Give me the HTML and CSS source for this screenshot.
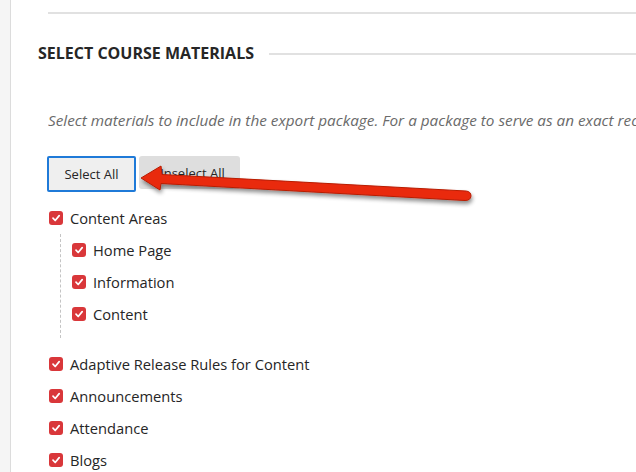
FILE: index.html
```html
<!DOCTYPE html>
<html>
<head>
<meta charset="utf-8">
<link rel="stylesheet" href="styles.css">
</head>
<body>
<div class="page">
  <div class="gutter"></div>
  <div class="main">
    <div class="topline"></div>
    <div class="heading">
      <h2>SELECT COURSE MATERIALS</h2>
      <div class="rule"></div>
    </div>
    <p class="desc">Select materials to include in the export package. For a package to serve as an exact record of the course, select all materials.</p>
    <div class="buttons">
      <button class="btn btn-primary">Select All</button>
      <button class="btn btn-secondary">Unselect All</button>
    </div>
    <ul class="list">
      <li class="item"><span class="cb"><svg viewBox="0 0 14 14"><rect width="14" height="14" rx="3" fill="#d9373a"/><path d="M4 7.2 L6.2 9.5 L10.2 4.6" fill="none" stroke="#fff" stroke-width="1.7" stroke-linecap="round" stroke-linejoin="round"/></svg></span>Content Areas</li>
      <li class="group">
        <ul class="sublist">
          <li class="item"><span class="cb"><svg viewBox="0 0 14 14"><rect width="14" height="14" rx="3" fill="#d9373a"/><path d="M4 7.2 L6.2 9.5 L10.2 4.6" fill="none" stroke="#fff" stroke-width="1.7" stroke-linecap="round" stroke-linejoin="round"/></svg></span>Home Page</li>
          <li class="item"><span class="cb"><svg viewBox="0 0 14 14"><rect width="14" height="14" rx="3" fill="#d9373a"/><path d="M4 7.2 L6.2 9.5 L10.2 4.6" fill="none" stroke="#fff" stroke-width="1.7" stroke-linecap="round" stroke-linejoin="round"/></svg></span>Information</li>
          <li class="item"><span class="cb"><svg viewBox="0 0 14 14"><rect width="14" height="14" rx="3" fill="#d9373a"/><path d="M4 7.2 L6.2 9.5 L10.2 4.6" fill="none" stroke="#fff" stroke-width="1.7" stroke-linecap="round" stroke-linejoin="round"/></svg></span>Content</li>
        </ul>
      </li>
      <li class="item gap"><span class="cb"><svg viewBox="0 0 14 14"><rect width="14" height="14" rx="3" fill="#d9373a"/><path d="M4 7.2 L6.2 9.5 L10.2 4.6" fill="none" stroke="#fff" stroke-width="1.7" stroke-linecap="round" stroke-linejoin="round"/></svg></span>Adaptive Release Rules for Content</li>
      <li class="item"><span class="cb"><svg viewBox="0 0 14 14"><rect width="14" height="14" rx="3" fill="#d9373a"/><path d="M4 7.2 L6.2 9.5 L10.2 4.6" fill="none" stroke="#fff" stroke-width="1.7" stroke-linecap="round" stroke-linejoin="round"/></svg></span>Announcements</li>
      <li class="item"><span class="cb"><svg viewBox="0 0 14 14"><rect width="14" height="14" rx="3" fill="#d9373a"/><path d="M4 7.2 L6.2 9.5 L10.2 4.6" fill="none" stroke="#fff" stroke-width="1.7" stroke-linecap="round" stroke-linejoin="round"/></svg></span>Attendance</li>
      <li class="item"><span class="cb"><svg viewBox="0 0 14 14"><rect width="14" height="14" rx="3" fill="#d9373a"/><path d="M4 7.2 L6.2 9.5 L10.2 4.6" fill="none" stroke="#fff" stroke-width="1.7" stroke-linecap="round" stroke-linejoin="round"/></svg></span>Blogs</li>
    </ul>
  </div>
</div>
<svg class="arrow" width="636" height="472" viewBox="0 0 636 472">
  <defs>
    <filter id="sh" x="-10%" y="-50%" width="120%" height="200%">
      <feGaussianBlur in="SourceAlpha" stdDeviation="2"/>
      <feOffset dx="1" dy="3" result="b"/>
      <feComponentTransfer><feFuncA type="linear" slope="0.45"/></feComponentTransfer>
      <feMerge><feMergeNode/><feMergeNode in="SourceGraphic"/></feMerge>
    </filter>
  </defs>
  <path filter="url(#sh)" d="M141 178 L161 166 L162 174.5 L466 191 Q471 191.5 471 196 Q470.5 200.5 465 200.5 L161 183.5 L160 190 Z" fill="#e92a0c" stroke="#b81d06" stroke-width="1" stroke-linejoin="round"/>
</svg>
</body>
</html>
```

FILE: styles.css
```css
html, body {
  margin: 0;
  padding: 0;
  background: #fff;
}
body {
  font-family: "Open Sans", "Noto Sans", sans-serif;
  color: #262626;
  overflow: hidden;
  width: 636px;
  height: 472px;
  position: relative;
}
.page {
  display: flex;
  min-height: 472px;
}
.gutter {
  width: 10px;
  flex: 0 0 10px;
  background: #f5f5f5;
  border-right: 1px solid #dcdcdc;
}
.main {
  flex: 1;
  padding-left: 27px;
  min-width: 0;
  overflow: hidden;
}
.topline {
  margin-top: 12px;
  margin-left: 10px;
  height: 2px;
  background: #e1e1e1;
}
.heading {
  display: flex;
  align-items: center;
  margin-top: 27px;
}
.heading h2 {
  margin: 0;
  font-size: 16px;
  font-weight: 700;
  letter-spacing: 0;
  color: #262626;
  line-height: 24px;
  white-space: nowrap;
}
.heading .rule {
  flex: 1;
  height: 2px;
  background: #e1e1e1;
  margin-left: 15px;
  margin-top: 1px;
}
.desc {
  margin: 44px 0 0 10px;
  font-style: italic;
  font-size: 15.3px;
  color: #6a6a6a;
  white-space: nowrap;
  line-height: 22px;
  overflow: hidden;
}
.buttons {
  display: flex;
  gap: 3px;
  margin: 25px 0 0 9px;
  align-items: flex-start;
}
.btn {
  font-family: "Open Sans", "Noto Sans", sans-serif;
  font-size: 13px;
  color: #262626;
  height: 36px;
  border-radius: 3px;
  padding: 0;
}
.btn-primary {
  width: 89px;
  background: #efefef;
  border: 2px solid #1f7ad8;
  border-radius: 2px;
}
.btn-secondary {
  width: 101px;
  height: 33px;
  background: #dedede;
  border: none;
}
.list {
  list-style: none;
  margin: 10px 0 0 11px;
  padding: 0;
}
.item {
  display: flex;
  align-items: center;
  height: 32px;
  font-size: 14.7px;
  color: #262626;
}
.cb {
  width: 14px;
  height: 14px;
  margin-right: 7px;
  display: inline-flex;
}
.cb svg {
  width: 14px;
  height: 14px;
}
.group {
  margin-left: 11px;
  border-left: 1px dashed #c4c4c4;
  padding-left: 11px;
}
.sublist {
  list-style: none;
  margin: 0;
  padding: 0 0 8px 0;
}
.gap {
  margin-top: 10px;
}
.arrow {
  position: absolute;
  left: 0;
  top: 0;
  pointer-events: none;
}
```
